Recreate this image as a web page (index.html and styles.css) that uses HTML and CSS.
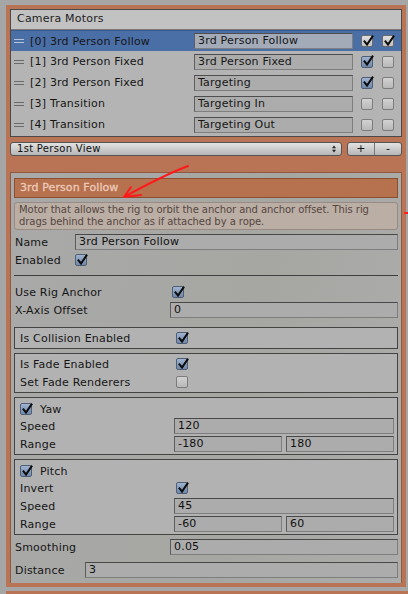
FILE: index.html
```html
<!DOCTYPE html>
<html>
<head>
<meta charset="utf-8">
<link rel="stylesheet" href="styles.css">
</head>
<body>
<div class="frame">
  <div class="list">
    <div class="list-head">Camera Motors</div>
    <div class="row sel">
      <span class="handle"></span><span class="rlabel">[0] 3rd Person Follow</span><span class="rinput">3rd Person Follow</span>
      <span class="cb on"><svg viewBox="0 0 12 12"><path d="M2.5 6.5 L5 9.5 L10.5 1.5"/></svg></span>
      <span class="cb on"><svg viewBox="0 0 12 12"><path d="M2.5 6.5 L5 9.5 L10.5 1.5"/></svg></span>
    </div>
    <div class="row">
      <span class="handle"></span><span class="rlabel">[1] 3rd Person Fixed</span><span class="rinput">3rd Person Fixed</span>
      <span class="cb on"><svg viewBox="0 0 12 12"><path d="M2.5 6.5 L5 9.5 L10.5 1.5"/></svg></span>
      <span class="cb"></span>
    </div>
    <div class="row">
      <span class="handle"></span><span class="rlabel">[2] 3rd Person Fixed</span><span class="rinput">Targeting</span>
      <span class="cb on"><svg viewBox="0 0 12 12"><path d="M2.5 6.5 L5 9.5 L10.5 1.5"/></svg></span>
      <span class="cb"></span>
    </div>
    <div class="row">
      <span class="handle"></span><span class="rlabel">[3] Transition</span><span class="rinput">Targeting In</span>
      <span class="cb"></span>
      <span class="cb"></span>
    </div>
    <div class="row">
      <span class="handle"></span><span class="rlabel">[4] Transition</span><span class="rinput">Targeting Out</span>
      <span class="cb"></span>
      <span class="cb"></span>
    </div>
  </div>

  <div class="ddrow">
    <div class="dropdown">
      <span>1st Person View</span>
      <svg class="updown" viewBox="0 0 5 9"><path d="M2.5 0 L5 3.5 L0 3.5 Z M2.5 9 L5 5.5 L0 5.5 Z"/></svg>
    </div>
    <div class="btns"><span class="btn">+</span><span class="btn">-</span></div>
  </div>

  <div class="section">
    <div class="sec-head">3rd Person Follow</div>
    <div class="desc">Motor that allows the rig to orbit the anchor and anchor offset. This rig<br>drags behind the anchor as if attached by a rope.</div>

    <div class="field name-row"><span class="lbl w59">Name</span><span class="inp grow">3rd Person Follow</span></div>
    <div class="field enabled-row"><span class="lbl w60">Enabled</span><span class="cb on"><svg viewBox="0 0 12 12"><path d="M2.5 6.5 L5 9.5 L10.5 1.5"/></svg></span></div>
    <div class="sep"></div>
    <div class="field rig-row"><span class="lbl w157">Use Rig Anchor</span><span class="cb on"><svg viewBox="0 0 12 12"><path d="M2.5 6.5 L5 9.5 L10.5 1.5"/></svg></span></div>
    <div class="field xoff-row"><span class="lbl w155">X-Axis Offset</span><span class="inp grow">0</span></div>

    <div class="box coll-box">
      <div class="field"><span class="lbl w156">Is Collision Enabled</span><span class="cb on"><svg viewBox="0 0 12 12"><path d="M2.5 6.5 L5 9.5 L10.5 1.5"/></svg></span></div>
    </div>

    <div class="box fade-box">
      <div class="field"><span class="lbl w156">Is Fade Enabled</span><span class="cb on"><svg viewBox="0 0 12 12"><path d="M2.5 6.5 L5 9.5 L10.5 1.5"/></svg></span></div>
      <div class="field mt2"><span class="lbl w156">Set Fade Renderers</span><span class="cb"></span></div>
    </div>

    <div class="box yaw-box">
      <div class="field"><span class="cb on"><svg viewBox="0 0 12 12"><path d="M2.5 6.5 L5 9.5 L10.5 1.5"/></svg></span><span class="lbl head-lbl">Yaw</span></div>
      <div class="field mt1"><span class="lbl w154">Speed</span><span class="inp grow">120</span></div>
      <div class="field mt2"><span class="lbl w154">Range</span><span class="inp half">-180</span><span class="inp half">180</span></div>
    </div>

    <div class="box pitch-box">
      <div class="field"><span class="cb on"><svg viewBox="0 0 12 12"><path d="M2.5 6.5 L5 9.5 L10.5 1.5"/></svg></span><span class="lbl head-lbl">Pitch</span></div>
      <div class="field mt1"><span class="lbl w156">Invert</span><span class="cb on"><svg viewBox="0 0 12 12"><path d="M2.5 6.5 L5 9.5 L10.5 1.5"/></svg></span></div>
      <div class="field mt2"><span class="lbl w154">Speed</span><span class="inp grow">45</span></div>
      <div class="field mt2"><span class="lbl w154">Range</span><span class="inp half">-60</span><span class="inp half">60</span></div>
    </div>

    <div class="field smooth-row"><span class="lbl w155">Smoothing</span><span class="inp grow">0.05</span></div>
    <div class="field dist-row"><span class="lbl w69">Distance</span><span class="inp grow">3</span></div>
  </div>
</div>
<div class="next"></div>

<svg class="annot" viewBox="0 0 408 594" width="408" height="594">
  <path d="M188 166 Q 162 176 124 197 M124 197 L131 187 M124 197 L141 195"/>
  <path d="M405 213 L408 213"/>
</svg>
</body>
</html>
```

FILE: styles.css
```css
* { box-sizing: border-box; }

html, body {
  margin: 0;
  padding: 0;
}

body {
  width: 408px;
  height: 594px;
  overflow: hidden;
  background: #a6a6a6;
  font-family: "DejaVu Sans", Verdana, sans-serif;
  font-size: 11px;
  letter-spacing: 0.2px;
  color: #161616;
  position: relative;
}

.frame {
  margin: 5px 0 0 6px;
  width: 400px;
  padding: 4px 4px 4px 4px;
  background: #b87455;
}

/* ---------- list ---------- */
.list {
  height: 128px;
  border: 1px solid #4a4a4a;
  background: #b4b4b4;
}

.list-head {
  height: 20px;
  line-height: 18px;
  padding-left: 6px;
  background: #c2c2c2;
  border-bottom: 1px solid #7a7a7a;
  color: #1e1e1e;
}

.row {
  height: 21px;
  display: flex;
  align-items: center;
  padding-left: 3px;
}

.row.sel {
  background: #4a6ea6;
  border-top: 1px solid #3a5a8a;
}

.handle {
  width: 10px;
  height: 4px;
  border-top: 1px solid #6a6a6a;
  border-bottom: 1px solid #6a6a6a;
  margin-right: 6px;
}

.sel .handle {
  border-color: #b8c4d8;
}

.rlabel {
  width: 164px;
  white-space: nowrap;
}

.rinput {
  width: 159px;
  height: 16px;
  line-height: 14px;
  padding-left: 3px;
  background: #acacac;
  border: 1px solid #7e7e7e;
  border-top-color: #4e4e4e;
  border-left-color: #5e5e5e;
  margin-right: 8px;
}

.sel .rinput {
  background: #a3abb9;
}

.row .cb + .cb {
  margin-left: 9px;
}

/* ---------- checkbox ---------- */
.cb {
  width: 12px;
  height: 12px;
  flex: none;
  border: 1px solid #7c7c7c;
  border-radius: 2px;
  background: linear-gradient(#d2d2d2, #b8b8b8);
  position: relative;
  display: inline-block;
}

.cb.on {
  border-color: #4e5e74;
  background: linear-gradient(#9fb3cf, #6f88ab);
}

.sel .cb.on {
  border-color: #6a6a6a;
  background: linear-gradient(#dedede, #c4c4c4);
}

.cb svg {
  position: absolute;
  left: -0.5px;
  top: -1.5px;
  width: 12px;
  height: 12px;
  overflow: visible;
}

.cb svg path {
  fill: none;
  stroke: #0d0d0d;
  stroke-width: 2;
  stroke-linecap: square;
  stroke-linejoin: miter;
}

/* ---------- dropdown ---------- */
.ddrow {
  display: flex;
  margin-top: 5px;
  height: 14px;
}

.dropdown {
  width: 332px;
  height: 14px;
  border: 1px solid #555;
  border-radius: 3px;
  background: linear-gradient(#e2e2e2, #b6b6b6);
  font-size: 10px;
  line-height: 12px;
  letter-spacing: 0.3px;
  padding-left: 6px;
  display: flex;
  justify-content: space-between;
  align-items: center;
  padding-right: 5px;
  color: #111;
}

.updown {
  width: 4px;
  height: 8px;
}

.updown path {
  fill: #222;
}

.btns {
  display: flex;
  margin-left: 5px;
  width: 55px;
  border: 1px solid #555;
  border-radius: 3px;
  background: linear-gradient(#e2e2e2, #b6b6b6);
}

.btn {
  flex: 1;
  text-align: center;
  font-size: 11px;
  line-height: 12px;
  color: #111;
}

.btn + .btn {
  border-left: 1px solid #777;
}

/* ---------- section ---------- */
.section {
  margin-top: 16px;
  border: 1px solid #8d5a42;
  border-bottom: none;
  background: linear-gradient(100deg, #a9a9a9, #a6a6a2 60%, #acacac);
  padding: 5px 3px 5px 3px;
}

.sec-head {
  height: 20px;
  background: #b6714f;
  border: 1px solid #8b4f33;
  color: #ecc8b6;
  line-height: 18px;
  padding-left: 5px;
  letter-spacing: 0.1px;
  -webkit-text-stroke: 0.35px #ecc8b6;
}

.desc {
  margin-top: 4px;
  height: 28px;
  background: #bbaea5;
  border: 1px solid #978b83;
  border-radius: 3px;
  font-size: 10px;
  line-height: 12px;
  padding: 1px 0 0 4px;
  color: #55473f;
  letter-spacing: -0.06px;
  white-space: nowrap;
}

.field {
  display: flex;
  align-items: center;
  height: 16px;
}

.lbl {
  white-space: nowrap;
  flex: none;
}

.w59 { width: 60px; }
.w60 { width: 60px; }
.w69 { width: 70px; }
.w154 { width: 154px; }
.w155 { width: 155px; }
.w156 { width: 156px; }
.w157 { width: 157px; }

.inp {
  height: 16px;
  line-height: 14px;
  padding-left: 3px;
  background: #acacac;
  border: 1px solid #7e7e7e;
  border-top-color: #484848;
  border-left-color: #5c5c5c;
  color: #111;
}

.grow { flex: 1; }

.half {
  width: 108px;
}

.half + .half {
  margin-left: 4px;
}

.name-row {
  margin-top: 4px;
  padding-left: 1px;
}

.enabled-row {
  margin-top: 2px;
  padding-left: 1px;
}

.sep {
  margin-top: 7px;
  height: 1px;
  background: #404040;
}

.rig-row {
  margin-top: 8px;
  padding-left: 1px;
}

.xoff-row {
  margin-top: 2px;
  padding-left: 1px;
}

.box {
  border: 1px solid #444;
  background: #b2b2b2;
  padding: 0 3px 0 5px;
}

.coll-box {
  margin-top: 9px;
  padding-top: 2px;
  padding-bottom: 2px;
}

.fade-box {
  margin-top: 4px;
  padding-top: 2px;
  padding-bottom: 2px;
}

.yaw-box {
  margin-top: 4px;
  padding-top: 3px;
  padding-bottom: 2px;
}

.pitch-box {
  margin-top: 4px;
  padding-top: 3px;
  padding-bottom: 2px;
}

.mt1 { margin-top: 1px; }
.mt2 { margin-top: 2px; }

.head-lbl {
  margin-left: 8px;
}

.smooth-row {
  margin-top: 4px;
  padding-left: 1px;
}

.dist-row {
  margin-top: 7px;
  padding-left: 1px;
}

.next {
  margin: 4px 0 0 6px;
  height: 10px;
  background: #b87455;
}

/* ---------- annotation ---------- */
.annot {
  position: absolute;
  left: 0;
  top: 0;
  pointer-events: none;
}

.annot path {
  fill: none;
  stroke: #ff1a1a;
  stroke-width: 2;
  stroke-linecap: round;
  stroke-linejoin: round;
}
```
